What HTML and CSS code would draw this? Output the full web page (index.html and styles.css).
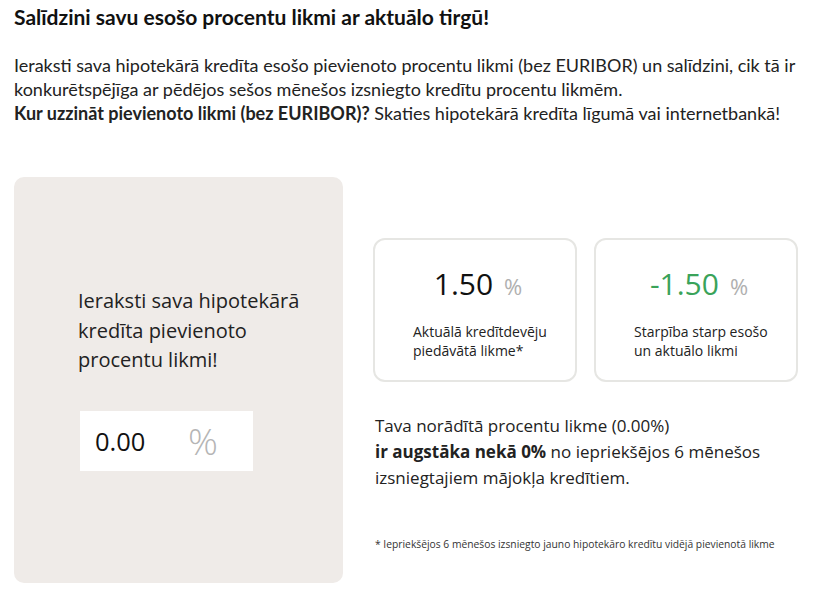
FILE: index.html
```html
<!DOCTYPE html>
<html lang="lv">
<head>
<meta charset="utf-8">
<link rel="stylesheet" href="styles.css">
</head>
<body>
<div class="page">
  <h1 class="title">Salīdzini savu esošo procentu likmi ar aktuālo tirgū!</h1>
  <p class="intro">Ieraksti sava hipotekārā kredīta esošo pievienoto procentu likmi (bez EURIBOR) un salīdzini, cik tā ir konkurētspējīga ar pēdējos sešos mēnešos izsniegto kredītu procentu likmēm.<br><b>Kur uzzināt pievienoto likmi (bez EURIBOR)?</b> Skaties hipotekārā kredīta līgumā vai internetbankā!</p>
  <div class="calc">
    <div class="input-card">
      <div class="input-label">Ieraksti sava hipotekārā kredīta pievienoto procentu likmi!</div>
      <div class="input-box"><span class="input-value">0.00</span><span class="input-pct">%</span></div>
    </div>
    <div class="results">
      <div class="stats">
        <div class="stat">
          <div class="stat-num"><span class="num">1.50</span><span class="pct">%</span></div>
          <div class="stat-label">Aktuālā kredītdevēju piedāvātā likme*</div>
        </div>
        <div class="stat">
          <div class="stat-num"><span class="num green">-1.50</span><span class="pct">%</span></div>
          <div class="stat-label">Starpība starp esošo un aktuālo likmi</div>
        </div>
      </div>
      <div class="verdict">
        <div class="vline">Tava norādītā procentu likme (0.00%)</div>
        <div class="vline"><b>ir augstāka nekā 0%</b> <span>no iepriekšējos 6 mēnešos</span></div>
        <div class="vline">izsniegtajiem mājokļa kredītiem.</div>
      </div>
      <p class="footnote">* Iepriekšējos 6 mēnešos izsniegto jauno hipotekāro kredītu vidējā pievienotā likme</p>
    </div>
  </div>
</div>
</body>
</html>
```
FILE: styles.css
```css
html, body { margin: 0; padding: 0; background: #fff; }
.page { padding: 0 14px; color: #1f1f1f; font-family: Lato, "Open Sans", sans-serif; }
.title { margin: 0; padding-top: 4px; font-size: 21px; line-height: 26px; font-weight: 700; color: #111; }
.intro { margin: 23px 0 0; font-size: 18px; line-height: 24px; color: #222; }
.intro b { font-weight: 700; }
.calc { display: flex; margin-top: 52px; font-family: "Open Sans", sans-serif; }
.input-card { width: 329px; height: 406px; box-sizing: border-box; background: #efebe8; border-radius: 10px; padding: 109px 0 0 64px; flex-shrink: 0; }
.input-label { font-size: 20px; line-height: 29.5px; color: #222; width: 240px; }
.input-box { margin-top: 36px; margin-left: 2px; width: 173px; height: 60px; background: #fff; display: flex; align-items: center; }
.input-value { font-size: 25.5px; color: #111; padding-left: 15px; width: 93px; }
.input-pct { font-size: 37px; color: #b5b5b5; font-weight: 300; }
.results { margin-left: 30px; padding-top: 61px; }
.stats { display: flex; gap: 17px; }
.stat { width: 204px; height: 144px; box-sizing: border-box; border: 2px solid #e6e6e3; border-radius: 12px; padding: 23px 0 0 38px; }
.stat-num { display: flex; align-items: baseline; justify-content: center; padding-right: 32px; height: 40px; }
.num { font-size: 30px; color: #111; font-weight: 400; }
.num.green { color: #3aa35a; }
.pct { font-size: 22px; color: #b0b0b0; margin-left: 11px; }
.stat-label { margin-top: 19px; font-size: 14px; line-height: 19px; color: #222; width: 145px; }
.verdict { margin: 31px 0 0 2px; font-size: 17px; line-height: 26px; color: #222; }
.vline { white-space: nowrap; }
.verdict b { font-weight: 700; }
.footnote { margin: 46px 0 0 2px; font-size: 10.3px; color: #333; }
```
